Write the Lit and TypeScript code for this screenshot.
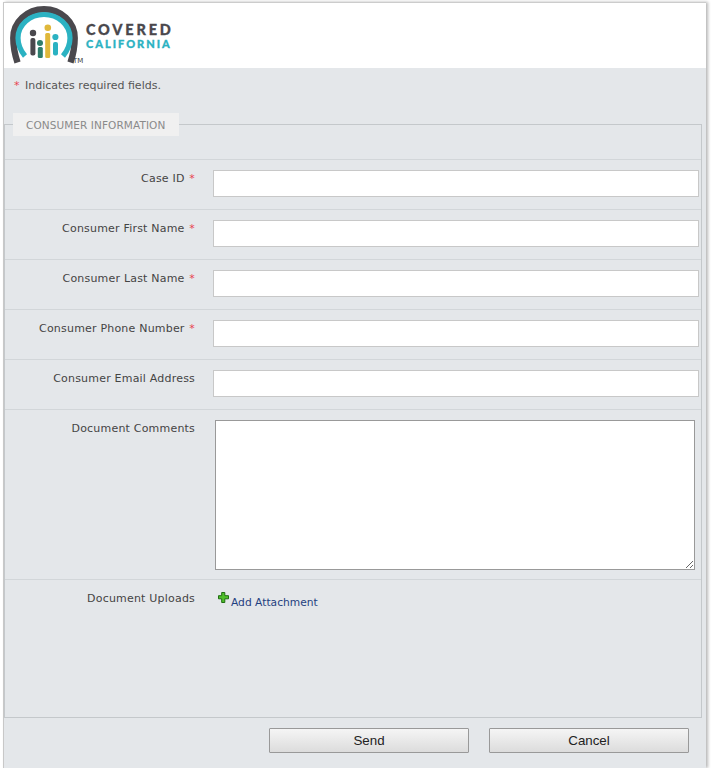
import { LitElement, css, html } from "lit";
import { customElement } from "lit/decorators.js";

const FIELDS = [
  { label: "Case ID", required: true },
  { label: "Consumer First Name", required: true },
  { label: "Consumer Last Name", required: true },
  { label: "Consumer Phone Number", required: true },
  { label: "Consumer Email Address", required: false },
];

@customElement("app-root")
export class AppRoot extends LitElement {
  renderLogo() {
    return html`
      <svg class="logo__mark" width="80" height="66" viewBox="0 0 80 66">
        <path
          d="M17.500 62.500C15 55 13.300 47 13.300 38A30.700 28.800 0 0 1 44 9.200A30.700 28.800 0 0 1 74.700 38C74.700 47 73 55 70.500 62.500"
          fill="none"
          stroke="#4a484d"
          stroke-width="6.4"
        />
        <path
          d="M25 56C20 50 18 44 18 38A26 23.500 0 0 1 44 14.500A26 23.500 0 0 1 70 38C70 44 68 50 63 56"
          fill="none"
          stroke="#2bb2c2"
          stroke-width="5.200"
        />
        <circle cx="33" cy="33" r="3.200" fill="#4a484d" />
        <rect x="30.400" y="38" width="5" height="17.500" rx="2" fill="#4a484d" />
        <circle cx="40" cy="43" r="3" fill="#2e7d6b" />
        <rect x="37.800" y="47" width="5" height="11" rx="1.500" fill="#2e7d6b" />
        <circle cx="47.800" cy="27.800" r="3.300" fill="#e0b83a" />
        <rect x="45.200" y="33" width="5" height="25" rx="1.500" fill="#e0b83a" />
        <circle cx="55.400" cy="37" r="3.100" fill="#2bb2c2" />
        <rect x="53" y="42" width="5" height="13.500" rx="2" fill="#2bb2c2" />
      </svg>
      <span class="logo__tm">TM</span>
      <div class="logo__text">
        <span class="logo__covered">COVERED</span>
        <span class="logo__california">CALIFORNIA</span>
      </div>
    `;
  }

  render() {
    return html`
      <div class="frame">
        <header class="header">${this.renderLogo()}</header>
        <div class="note"><span class="star star--note">*</span> Indicates required fields.</div>
        <fieldset class="info">
          <legend class="info__legend">CONSUMER INFORMATION</legend>
          <div class="info__spacer"></div>
          ${FIELDS.map(
            (f) => html`
              <div class="row">
                <label class="row__label">
                  ${f.label}${f.required ? html` <span class="star star--label">*</span>` : ""}
                </label>
                <input class="row__input" type="text" />
              </div>
            `,
          )}
          <div class="row row--comments">
            <label class="row__label">Document Comments</label>
            <textarea class="row__textarea"></textarea>
          </div>
          <div class="row row--uploads">
            <label class="row__label">Document Uploads</label>
            <a class="attach">
              <svg class="attach__icon" width="11" height="11" viewBox="0 0 11 11">
                <path
                  d="M3.700.5h3.100v3.200h3.700v3.100H6.800v3.700H3.700V6.800H.5V3.700h3.200z"
                  fill="#4fbf2a"
                  stroke="#1f6d12"
                />
              </svg>
              <span>Add Attachment</span>
            </a>
          </div>
        </fieldset>
        <div class="actions">
          <button class="btn">Send</button>
          <button class="btn">Cancel</button>
        </div>
      </div>
    `;
  }

  static styles = css`
    :host {
      display: block;
      width: 714px;
      height: 768px;
      overflow: hidden;
      background: #fff;
      font-family: "DejaVu Sans", Verdana, sans-serif;
      font-size: 11px;
      color: #444;
    }

    .frame {
      box-sizing: border-box;
      width: 703px;
      height: 766px;
      margin: 2px 0 0 3px;
      background: #e4e7ea;
      border-top: 1px solid #ccc;
      border-left: 1px solid #c8c8c8;
      box-shadow: 2px 0 3px #b8b8b8;
    }

    .header {
      position: relative;
      display: flex;
      align-items: flex-start;
      height: 65px;
      background: #fff;
    }

    .logo__mark {
      flex: none;
      margin-left: -4px;
      margin-top: -3px;
    }

    .logo__tm {
      position: absolute;
      left: 69px;
      top: 54px;
      font-size: 7px;
      color: #444;
    }

    .logo__text {
      display: flex;
      flex-direction: column;
      margin: 19px 0 0 6px;
      font-family: Lato, "Open Sans", sans-serif;
      font-weight: 900;
      -webkit-text-stroke: 0.300px;
    }

    .logo__covered {
      font-size: 14.500px;
      line-height: 16px;
      letter-spacing: 2.800px;
      color: #4a484d;
    }

    .logo__california {
      font-size: 11px;
      line-height: 12px;
      letter-spacing: 2px;
      color: #2bb2c2;
    }

    .note {
      height: 45px;
      padding: 11px 0 0 10px;
      box-sizing: border-box;
      line-height: 14px;
      color: #555;
    }

    .star {
      color: #e8414f;
    }

    .star--note {
      margin-right: 2px;
    }

    .star--label {
      margin-left: 1px;
    }

    .info {
      box-sizing: border-box;
      width: 698px;
      height: 605px;
      margin: 0;
      padding: 0;
      border: 1px solid #c4c8cb;
    }

    .info__legend {
      box-sizing: border-box;
      width: 166px;
      height: 23px;
      margin-left: 8px;
      padding: 0 0 0 13px;
      background: #f0f0f0;
      color: #8a8a8a;
      line-height: 25px;
      font-size: 10.500px;
      letter-spacing: 0.080px;
      white-space: nowrap;
    }

    .info__spacer {
      height: 23px;
    }

    .row {
      display: flex;
      align-items: flex-start;
      box-sizing: border-box;
      height: 50px;
      padding-top: 10px;
      border-top: 1px solid #d2d6d9;
    }

    .row--comments {
      height: 170px;
    }

    .row--uploads {
      height: auto;
    }

    .row__label {
      box-sizing: border-box;
      flex: none;
      width: 190px;
      padding-top: 2px;
      text-align: right;
      line-height: 14px;
      letter-spacing: 0.200px;
      white-space: nowrap;
    }

    .row__input {
      box-sizing: border-box;
      width: 486px;
      height: 27px;
      margin: 0 0 0 18px;
      border: 1px solid #c8c8c8;
      background: #fff;
    }

    .row__textarea {
      box-sizing: border-box;
      width: 480px;
      height: 150px;
      margin: 0 0 0 20px;
      border: 1px solid #999;
      background: #fff;
    }

    .attach {
      display: flex;
      align-items: flex-start;
      margin: 2px 0 0 23px;
      color: #1f3f80;
      font-size: 10.700px;
      line-height: 14px;
    }

    .attach__icon {
      flex: none;
      margin-right: 2px;
    }

    .attach span {
      margin-top: 4px;
    }

    .actions {
      display: flex;
      justify-content: flex-end;
      gap: 20px;
      padding: 10px 17px 0 0;
    }

    .btn {
      box-sizing: border-box;
      width: 200px;
      height: 25px;
      padding: 0;
      border: 1px solid #999;
      border-radius: 1px;
      background: linear-gradient(#f5f5f5, #dcdcdc);
      font-family: "Liberation Sans", Arial, sans-serif;
      font-size: 13.330px;
      color: #222;
    }
  `;
}
